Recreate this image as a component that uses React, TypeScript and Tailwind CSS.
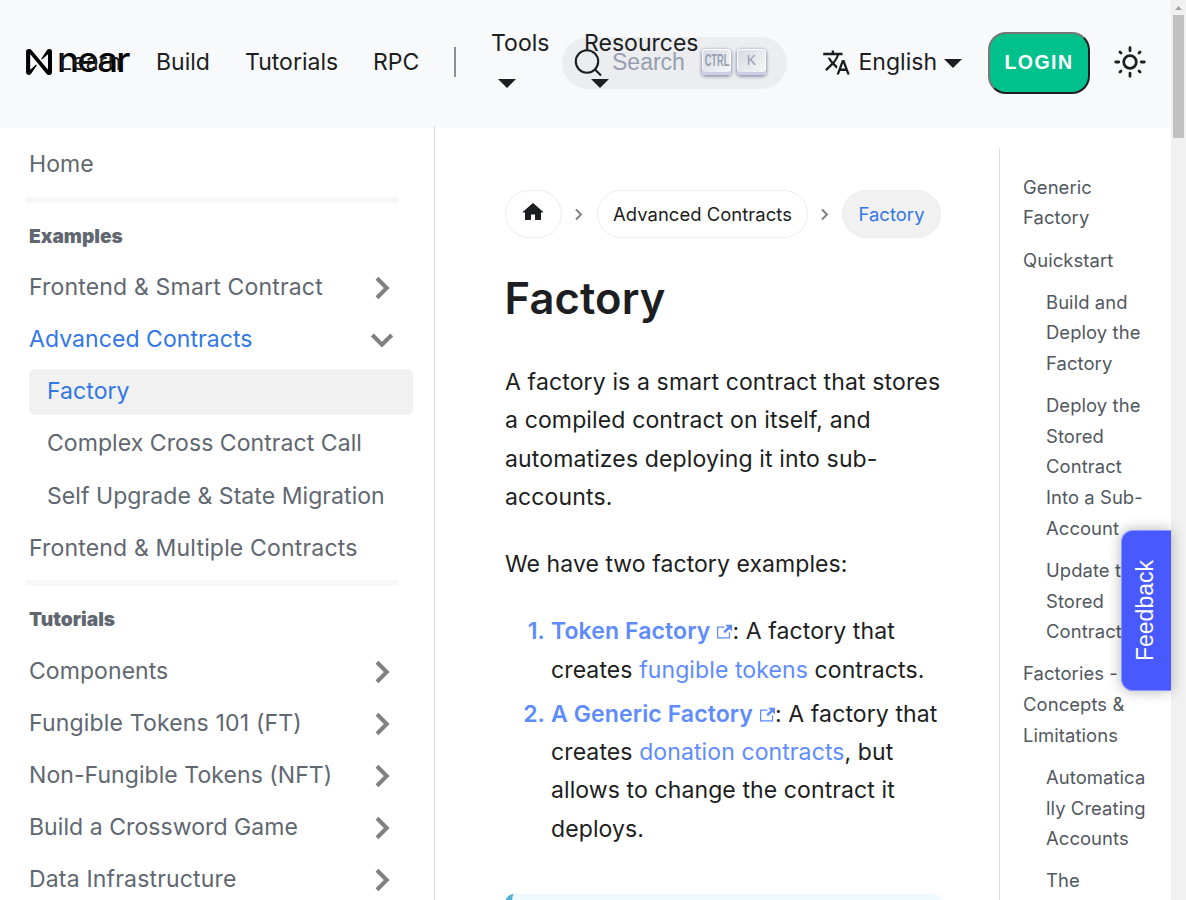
import type { ReactNode } from "react";

function Chevron({ open = false }: { open?: boolean }) {
  return (
    <svg className={`mr-[15.500px] size-8 ${open ? "rotate-90" : ""}`} viewBox="0 0 32 32" fill="none" stroke="#808080" strokeWidth="4.1">
      <path d="M11 6.3 20.7 16 11 25.7" />
    </svg>
  );
}

function Row({ children, arrow, open, active, nested, wide }: { children: ReactNode; arrow?: boolean; open?: boolean; active?: boolean; nested?: boolean; wide?: boolean }) {
  return (
    <li
      className={`mb-[6.200px] flex h-[46px] items-center justify-between rounded-md whitespace-nowrap ${wide ? "tracking-[0.160px]" : "tracking-[0.050px]"} ${nested ? "pl-[18px]" : ""} ${active || open ? "text-[#3277e6]" : ""} ${active ? "bg-[#f1f1f1]" : ""}`}
    >
      <span className="-mt-[1.500px]">{children}</span>
      {arrow && <Chevron open={open} />}
    </li>
  );
}

function SectionTitle({ children }: { children: ReactNode }) {
  return <li className="mt-[20px] mb-[16.200px] h-[26px] text-[19.200px] leading-[26px] font-black tracking-normal">{children}</li>;
}

function Caret({ className = "" }: { className?: string }) {
  return (
    <svg className={`h-[9px] w-[18px] ${className}`} viewBox="0 0 18 9" fill="#1c1e21">
      <path d="M0 0H18L9 9Z" />
    </svg>
  );
}

function Header() {
  return (
    <header className="relative z-10 flex h-[126px] w-[1171px] shrink-0 items-center bg-[#f8f9fb] pb-0.5 tracking-normal whitespace-nowrap shadow-[0_1px_2px_0_rgba(0,0,0,0.05)]">
      <div className="relative ml-[26px] flex h-7 w-[104px] items-center">
        <svg className="h-[26px] w-[26px]" viewBox="0 0 90 90">
          <path d="M72.2 4.6 53.4 32.5a2 2 0 0 0 3 2.6L74.900 19a.8.8 0 0 1 1.200.5v50.300a.8.8 0 0 1-1.300.5L18.900 3.400A9 9 0 0 0 12 .2h-2A9.800 9.800 0 0 0 .2 10v70A9.800 9.800 0 0 0 10 89.800a10 10 0 0 0 8.300-4.600L37.100 57.300a2 2 0 0 0-3-2.600L15.600 70.800a.8.8 0 0 1-1.200-.6V19.900a.8.8 0 0 1 1.300-.5L71.500 86.600a9.600 9.600 0 0 0 6.900 3.200h2A9.800 9.800 0 0 0 90 80V10A9.800 9.800 0 0 0 80.500.2a10 10 0 0 0-8.300 4.400Z" />
        </svg>
        <span className="absolute top-[-10px] left-[31px] origin-left scale-x-[1.080] text-[34px] leading-[44px] font-medium tracking-[-1.700px] text-black">near</span>
        <span className="absolute top-[-5px] left-[33px]">Learn</span>
      </div>
      <span className="ml-[26px] w-[54px]">Build</span>
      <span className="ml-[35px] w-[93px]">Tutorials</span>
      <span className="ml-[35px] w-[46px]">RPC</span>
      <i className="ml-[35px] h-[30px] w-0.5 bg-[#8e9094]" />
      <div className="relative z-10 -mt-[12px] ml-[35px] flex w-[58px] flex-col gap-[17px]">
        <span className="leading-[38px]">Tools</span>
        <Caret className="ml-[7px]" />
      </div>
      <div className="relative z-10 -mt-[12px] ml-[35px] flex w-0 flex-col gap-[17px]">
        <span className="leading-[38px]">Resources</span>
        <Caret className="ml-[7px]" />
      </div>
      <div className="mt-0.5 -ml-[22px] flex h-[52px] w-[225px] shrink-0 items-center rounded-full bg-[#ebedf0] pl-[12px]">
        <svg className="-mt-0.5 size-[29px]" viewBox="0 0 29 29" fill="none" stroke="#1c1e21" strokeWidth="2.1">
          <circle cx="13" cy="13.500" r="11.200" />
          <path d="m21 21.500 6 6" />
        </svg>
        <span className="-mt-0.5 ml-[9px] w-[90px] font-['Liberation_Sans',sans-serif] text-[23px] text-[#969faf]">Search</span>
        <Key wide>CTRL</Key>
        <Key>K</Key>
      </div>
      <svg className="ml-[35px] size-[29px]" viewBox="0 0 24 24" fill="#1c1e21">
        <path d="m12.870 15.070-2.540-2.510.03-.03A17.520 17.520 0 0 0 14.070 6H17V4h-7V2H8v2H1v1.990h11.170C11.500 7.920 10.440 9.750 9 11.350 8.070 10.320 7.300 9.190 6.690 8h-2c.73 1.630 1.730 3.170 2.980 4.560l-5.090 5.020L4 19l5-5 3.110 3.110.76-2.040zM18.500 10h-2L12 22h2l1.120-3h4.750L21 22h2l-4.500-12zm-2.620 7 1.620-4.330L19.120 17h-3.240z" />
      </svg>
      <span className="ml-[7.500px] w-[78.500px]">English</span>
      <Caret className="mt-[3px] ml-[7px]" />
      <button className="mt-0.5 ml-[26px] h-[62px] w-[102px] rounded-[18px] border-2 border-t-[#777] border-r-[#1c1e21] border-b-[#1c1e21] border-l-[#777] bg-[#00c08b] pb-0.5 font-['Liberation_Sans',sans-serif] text-[19.500px] font-bold tracking-[1.500px] text-white">LOGIN</button>
      <svg className="ml-[21.500px] size-[36px]" viewBox="0 0 24 24" fill="none" stroke="#1c1e21" strokeWidth="1.850" strokeLinecap="round">
        <circle cx="12" cy="12" r="4.200" />
        <path d="M12 2.500v2M12 19.500v2M2.500 12h2M19.500 12h2M5.300 5.300l.7.7M18 18l.7.7M5.300 18.700l.7-.7M18 6l.7-.7" />
      </svg>
    </header>
  );
}

function Key({ children, wide }: { children: ReactNode; wide?: boolean }) {
  return (
    <span className="mr-[6px] -mt-[3px] flex h-[26px] w-[29px] shrink-0 items-center justify-center rounded-[4px] bg-linear-[-225deg] from-[#d5dbe4] to-[#f8f8f8] pb-[3px] font-['Liberation_Sans',sans-serif] text-[#969faf] shadow-[inset_0_-3px_0_0_#cdcde6,inset_0_0_1px_1px_#fff,0_1px_3px_1px_rgba(30,35,90,0.4)]">
      {wide ? <span className="scale-x-[0.560] text-[16.500px] font-bold">{children}</span> : <span className="text-[14px]">{children}</span>}
    </span>
  );
}

function Sidebar() {
  return (
    <aside className="h-[774px] w-[435px] shrink-0 overflow-hidden border-r border-[#dadde1] pt-[16px] pl-[29px] text-[#606770]">
      <ul className="w-[384px]">
        <Row>Home</Row>
        <li className="mt-[8.600px] -ml-[3px] h-[6px] w-[372px] bg-[#f8f8f8]" />
        <SectionTitle>Examples</SectionTitle>
        <Row arrow wide>Frontend &amp; Smart Contract</Row>
        <Row arrow open>Advanced Contracts</Row>
        <Row nested active>Factory</Row>
        <Row nested>Complex Cross Contract Call</Row>
        <Row nested>Self Upgrade &amp; State Migration</Row>
        <Row wide>Frontend &amp; Multiple Contracts</Row>
        <li className="mt-[8.700px] -ml-[3px] h-[6px] w-[372px] bg-[#f8f8f8]" />
        <SectionTitle>Tutorials</SectionTitle>
        <Row arrow>Components</Row>
        <Row arrow wide>Fungible Tokens 101 (FT)</Row>
        <Row arrow>Non-Fungible Tokens (NFT)</Row>
        <Row arrow>Build a Crossword Game</Row>
        <Row arrow wide>Data Infrastructure</Row>
      </ul>
    </aside>
  );
}

function CrumbArrow() {
  return (
    <svg className="mr-[10px] ml-[8px] h-4 w-[17px]" viewBox="0 0 17 16" fill="none" stroke="#808080" strokeWidth="2">
      <path d="m6 3.500 5 5-5 5" />
    </svg>
  );
}

function External() {
  return (
    <svg className="ml-[7px] inline size-[15px] align-baseline" viewBox="0 0 24 24" fill="currentColor">
      <path d="M21 13v10H0V4h12v2H2v15h17v-8h2zm3-12H13.012l4.035 4-6.977 7.070 2.828 2.828 6.977-7.070L24 12V1z" />
    </svg>
  );
}

function Article() {
  return (
    <main className="h-[774px] w-[438px] shrink-0 overflow-hidden">
      <nav className="mt-[64px] flex h-12 items-center text-[18.430px] whitespace-nowrap">
        <span className="flex h-12 w-[57px] items-center justify-center rounded-full border border-[#ededed] pr-0.5">
          <svg className="mb-1 size-[24px]" viewBox="0 0 24 24" fill="#1c1e21">
            <path d="M10 19.500v-5h4v5c0 .3.200.5.500.5h5c.300 0 .500-.2.500-.5v-7h1.700c.46 0 .68-.57.33-.87L12.670 3.600c-.38-.34-.96-.34-1.340 0l-9.360 8.030c-.34.3-.13.87.33.87H4v7c0 .3.200.5.500.5h5c.300 0 .500-.2.500-.5z" />
          </svg>
        </span>
        <CrumbArrow />
        <span className="flex h-12 w-[211px] items-center justify-center rounded-full border border-[#ededed]">Advanced Contracts</span>
        <CrumbArrow />
        <span className="-ml-px flex h-12 w-[99px] items-center justify-center rounded-full border border-[#ededed] bg-[#f1f1f1] text-[#3277e6]">Factory</span>
      </nav>
      <h1 className="mt-[30px] -ml-[0.500px] text-[43.500px] leading-[60px] font-semibold tracking-[0.150px]">Factory</h1>
      <p className="mt-[35px] tracking-[0.120px]">A factory is a smart contract that stores a compiled contract on itself, and automatizes deploying it into sub-accounts.</p>
      <p className="mt-[28.500px]">We have two factory examples:</p>
      <ol className="mt-[28.700px] flex flex-col gap-[5.500px] tracking-[0.090px]">
        <li className="flex">
          <b className="w-[46px] shrink-0 pr-[6px] text-right font-semibold text-[#5e8cff]">1.</b>
          <div><b className="font-semibold text-[#5e8cff]">Token Factory<External /></b>: A factory that creates <a className="text-[#5e8cff]">fungible tokens</a> contracts.</div>
        </li>
        <li className="flex">
          <b className="w-[46px] shrink-0 pr-[6px] text-right font-semibold text-[#5e8cff]">2.</b>
          <div><b className="font-semibold text-[#5e8cff]">A Generic Factory<External /></b>: A factory that creates <a className="text-[#5e8cff]">donation contracts</a>, but allows to change the contract it deploys.</div>
        </li>
      </ol>
      <div className="mt-[45.800px] h-24 rounded-[9px] border-l-[7px] border-[#4cb3d4] bg-[#eef9fd]" />
    </main>
  );
}

const toc = [
  { lines: ["Generic", "Factory"] },
  { lines: ["Quickstart"] },
  { lines: ["Build and", "Deploy the", "Factory"], nested: true },
  { lines: ["Deploy the", "Stored", "Contract", "Into a Sub-", "Account"], nested: true },
  { lines: ["Update the", "Stored", "Contract"], nested: true },
  { lines: ["Factories -", "Concepts &", "Limitations"] },
  { lines: ["Automatica", "lly Creating", "Accounts"], nested: true },
  { lines: ["The"], nested: true },
];

export default function App() {
  return (
    <div className="flex h-[900px] w-[1186px] overflow-hidden bg-white font-['Inter',sans-serif] text-[23.040px] leading-[38.400px] tracking-[0.050px] text-[#1c1e21]">
      <div className="relative flex w-[1171px] shrink-0 flex-col">
        <Header />
        <div className="flex">
          <Sidebar />
          <div className="w-[70px] shrink-0" />
          <Article />
          <aside className="mt-[22px] ml-[56px] h-[752px] w-[172px] shrink-0 overflow-hidden border-l border-[#dadde1] pt-[23.700px] pl-[23px] text-[18.430px] leading-[30.650px] tracking-[0.080px] text-[#525860]">
            <ul className="flex flex-col gap-[11.500px]">
              {toc.map((item, i) => (
                <li key={i} className={`whitespace-nowrap ${item.nested ? "pl-[23px]" : ""}`}>
                  {item.lines.map((line) => (
                    <div key={line}>{line}</div>
                  ))}
                </li>
              ))}
            </ul>
          </aside>
        </div>
        <button className="absolute top-[530px] right-0 z-20 flex h-[161px] w-[50px] items-center justify-center rounded-l-[12px] border border-r-0 border-[#8a96ff] bg-[#485aff] font-['Liberation_Sans',sans-serif] text-white shadow-[0_0_14px_rgba(0,0,0,0.3)]">
          <span className="rotate-180 pl-0.5 text-[23px] tracking-normal [writing-mode:vertical-rl]">Feedback</span>
        </button>
      </div>
      <div className="flex w-[15px] shrink-0 flex-col items-center bg-[#f1f1f1]">
        <svg className="h-[15px] w-[15px] shrink-0" viewBox="0 0 15 15" fill="#a3a3a3">
          <path d="M4 10h7L7.500 6Z" />
        </svg>
        <div className="h-[123px] w-[11px] bg-[#c1c1c1]" />
      </div>
    </div>
  );
}
